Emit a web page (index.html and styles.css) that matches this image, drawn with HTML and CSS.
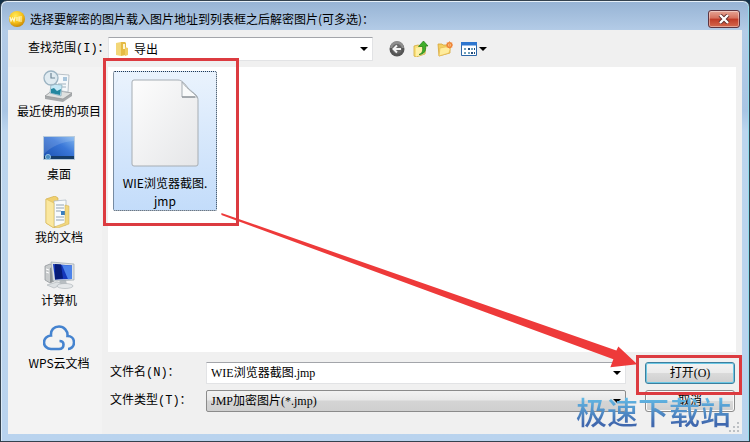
FILE: index.html
```
<!DOCTYPE html>
<html lang="zh-CN">
<head>
    <meta charset="UTF-8">
    <title>打开</title>
    <link rel="stylesheet" href="styles.css">
</head>
<body>
    <div class="window">
        <header class="titlebar">
            <svg class="app-icon" viewBox="0 0 16 16">
                <defs>
                    <radialGradient id="ball" cx="40%" cy="30%" r="70%">
                        <stop offset="0" stop-color="#ffe95a"/>
                        <stop offset="0.6" stop-color="#f7c21a"/>
                        <stop offset="1" stop-color="#c98a06"/>
                    </radialGradient>
                </defs>
                <circle cx="8" cy="8" r="8" fill="url(#ball)"/>
                <path d="M1 6l1 4 1.500-3 1.500 3 1-4M8 6v4M13 6h-3v4h3M10 8h3" fill="none" stroke="#fff8c8" stroke-width="1.200"/>
            </svg>
            <h1 class="title">选择要解密的图片载入图片地址到列表框之后解密图片(可多选)：</h1>
            <button class="close" type="button" aria-label="关闭">
                <svg viewBox="0 0 12 10">
                    <path d="M2 1l8 8M10 1l-8 8" stroke="#5c2a2a" stroke-width="4"/>
                    <path d="M2 1l8 8M10 1l-8 8" stroke="#fff" stroke-width="2.400"/>
                </svg>
            </button>
        </header>

        <form class="content">
            <div class="lookin">
                <label class="lookin-label" for="folder">查找范围(I)：</label>
                <div class="combo combo-folder">
                    <svg class="folder-icon" viewBox="0 0 14 16">
                        <path d="M1 2l5-1v14l-5-1z" fill="#f3d778"/>
                        <path d="M6 1h4l1 1v12l-5 1z" fill="#e5bb45"/>
                        <path d="M8 3h2v5H8z" fill="#fff6d0"/>
                        <path d="M10 6l3 1v7l-3 1z" fill="#f0cd62"/>
                    </svg>
                    <select id="folder"><option>导出</option></select>
                    <svg class="arrow" viewBox="0 0 8 4"><path d="M0 0h8L4 4z"/></svg>
                </div>
                <div class="tools">
                    <button type="button" aria-label="后退">
                        <svg class="tool-icon" viewBox="0 0 16 16">
                            <circle cx="8" cy="8" r="7.500" fill="#555"/>
                            <path d="M1 7a7 7 0 0 1 14 0z" fill="#8d8d8d"/>
                            <circle cx="8" cy="8" r="5" fill="#666"/>
                            <path d="M12 8H5M8 4.500L4.500 8 8 11.500" fill="none" stroke="#f2f2f2" stroke-width="2"/>
                        </svg>
                    </button>
                    <button type="button" aria-label="向上一级">
                        <svg class="tool-icon" viewBox="0 0 16 16">
                            <path d="M1 5l4-1 3 1 5-1-1 9-9 3-2-1z" fill="#f9e07a" stroke="#d3aa3c" stroke-width="0.800"/>
                            <path d="M3 7l10-2-2 8-8 2.500z" fill="#fff0a6"/>
                            <path d="M6 13.500c3.500-1 4-4 3.500-8H5.500L10.500 0l4.500 5h-2.500c.8 5-1.500 8.500-6.500 8.500z" fill="#3fae2a" stroke="#1f7a18" stroke-width="0.700"/>
                        </svg>
                    </button>
                    <button type="button" aria-label="新建文件夹">
                        <svg class="tool-icon" viewBox="0 0 16 16">
                            <path d="M1 3h4l1 1h7v8L2 15z" fill="#f3cf62" stroke="#d6a437" stroke-width="0.800"/>
                            <path d="M3 7l11-2-2 7-10 3z" fill="#ffec9c" stroke="#e2b64a" stroke-width="0.600"/>
                            <circle cx="12.500" cy="4" r="2.300" fill="#fff3c8" stroke="#ee8436" stroke-width="1.600"/>
                            <path d="M12.500 0v8M9 4h7M10 1.500l5 5M15 1.500l-5 5" stroke="#f08a3c" stroke-width="0.600"/>
                        </svg>
                    </button>
                    <button type="button" class="view-button" aria-label="查看">
                        <svg class="tool-icon" viewBox="0 0 16 16">
                            <path d="M0.500 1.500h15v13H.5z" fill="#fff" stroke="#2c67a8"/>
                            <path d="M0 1h16v3.500H0z" fill="#2d76cf"/>
                            <path d="M3 7h2v2H3zM10 7h2v2h-2zM7 11h2v2H7zM3 11h2v2H3z" fill="#6fa0ba"/>
                            <path d="M7 7h2v2H7zM10 11h2v2h-2zM13 7h1v2h-1zM13 11h1v2h-1z" fill="#244f7d"/>
                        </svg>
                        <svg class="arrow" viewBox="0 0 8 4"><path d="M0 0h8L4 4z"/></svg>
                    </button>
                </div>
            </div>

            <nav class="places">
                <button type="button" class="place">
                    <svg class="place-icon" viewBox="0 0 32 32">
                        <path d="M2 26l8-5 19 2v3l-9 6L2 29z" fill="#a6a9ab"/>
                        <path d="M2 26l8-6 19 3-9 6z" fill="#dfe1e0" stroke="#8e9193" stroke-width="0.700"/>
                        <path d="M13 4l13 1-1 17-12-2z" fill="#f5f8fa" stroke="#a9b4bb" stroke-width="0.800"/>
                        <path d="M20 7h4v4h-4z" fill="#a8c5dc"/>
                        <path d="M15 14h8M15 17h8" stroke="#9fb2bf"/>
                        <path d="M8 14l11 1-1 11-11-3z" fill="#c5e8f6" stroke="#86a9b8" stroke-width="0.700"/>
                        <path d="M8 19l3-1 3 3 4-2-1 6-9-2z" fill="#2387a0"/>
                        <circle cx="8" cy="8" r="7" fill="#dce9f0" fill-opacity="0.850" stroke="#9bb3c2" stroke-width="1.300"/>
                        <path d="M8 3v5h4" fill="none" stroke="#6f8797" stroke-width="1.200"/>
                    </svg>
                    <span>最近使用的项目</span>
                </button>
                <button type="button" class="place">
                    <svg class="place-icon" viewBox="0 0 32 32">
                        <defs>
                            <linearGradient id="sky" x1="0" y1="1" x2="1" y2="0">
                                <stop offset="0" stop-color="#1a4fae"/>
                                <stop offset="0.600" stop-color="#3a77d8"/>
                                <stop offset="1" stop-color="#7fb4ee"/>
                            </linearGradient>
                        </defs>
                        <path d="M0 3h32v24H0z" fill="#b8cbdc"/>
                        <path d="M1 4h30v22H1z" fill="url(#sky)"/>
                        <path d="M1 4h30v4C18 9 9 13 1 21z" fill="#fff" fill-opacity="0.140"/>
                        <path d="M1 23h30v3H1z" fill="#163c66"/>
                        <circle cx="5" cy="24" r="2.600" fill="#4a8ec4" stroke="#a8d3ea" stroke-width="0.800"/>
                    </svg>
                    <span>桌面</span>
                </button>
                <button type="button" class="place">
                    <svg class="place-icon" viewBox="0 0 32 32">
                        <path d="M3 3l9-3 3 2v27l-4 3-8-5z" fill="#f0d06f" stroke="#cfa941" stroke-width="0.600"/>
                        <path d="M11 5l12-1v25l-12 2z" fill="#f8fbfd" stroke="#a7b5c0" stroke-width="0.700"/>
                        <path d="M13 9h8M13 12h8M13 15h5M13 21h8M13 24h8" stroke="#93a5b4"/>
                        <path d="M18 15h4v4h-4z" fill="#3a7ec0"/>
                        <path d="M3 3l8 4v25l-8-5z" fill="#fae79f" stroke="#d9b856" stroke-width="0.600"/>
                        <path d="M22 9l4 1v18l-11 4-4-1 11-4z" fill="#f2d77f" stroke="#cfae52" stroke-width="0.500"/>
                    </svg>
                    <span>我的文档</span>
                </button>
                <button type="button" class="place">
                    <svg class="place-icon" viewBox="0 0 32 32">
                        <path d="M2 7l5-2 4 2v15l-4 2-5-3z" fill="#c8cbcc" stroke="#888e92" stroke-width="0.700"/>
                        <path d="M7 9l4-2v15l-4 2z" fill="#8f9497"/>
                        <path d="M3 10l3 1M3 13l3 1" stroke="#fff"/>
                        <path d="M17 21h6l1 5-8-1z" fill="#b8bec2"/>
                        <path d="M8 3l23 2v16L10 22z" fill="#dce0e3" stroke="#9ea7ad" stroke-width="0.700"/>
                        <path d="M10 5l19 1.500V20l-17 .5z" fill="#1537bb"/>
                        <path d="M12 5l6 .5 2 14-8 1z" fill="#071c78"/>
                        <path d="M19 6l10 .5V20l-4 .2z" fill="#4c82ea"/>
                        <path d="M4 26l10-3 6 2-9 4z" fill="#dde1e3" stroke="#a8afb3" stroke-width="0.600"/>
                        <ellipse cx="22" cy="27" rx="8" ry="2.500" fill="#e4e7e9" stroke="#a8afb3" stroke-width="0.600"/>
                    </svg>
                    <span>计算机</span>
                </button>
                <button type="button" class="place">
                    <svg class="place-icon" viewBox="0 0 32 32">
                        <path d="M25 27c3 0 6-2.500 6-6.500 0-4-3-6.500-6.500-6.500C25 9 21 4.500 16 4.500S7.500 8 8 13.500C4 13.500 1 17 1 20.500S4 27 8 27h8c3 0 4.500-2 4.500-4.500S18.500 19 16.500 19" fill="none" stroke="#4583cf" stroke-width="2.600"/>
                    </svg>
                    <span>WPS云文档</span>
                </button>
            </nav>

            <div class="files">
                <button type="button" class="file selected">
                    <svg class="file-icon" viewBox="0 0 68 88">
                        <defs>
                            <linearGradient id="paper" x1="0" y1="0" x2="1" y2="1">
                                <stop offset="0" stop-color="#fdfdfd"/>
                                <stop offset="1" stop-color="#e5e6e8"/>
                            </linearGradient>
                        </defs>
                        <path d="M3 1h44c4 0 7 4 10 8 3 3 6 5 8 7 2 2 2 4 2 6v63q0 2-2 2H3q-2 0-2-2V3q0-2 2-2z" fill="url(#paper)" stroke="#a6adb3"/>
                        <path d="M51 3v15h15C62 13 57 11 51 3z" fill="#f9fafa" stroke="#a6adb3"/>
                        <path d="M51 18h13" stroke="#7c8288"/>
                    </svg>
                    <span>WIE浏览器截图.<br>jmp</span>
                    <i class="mark mark-file"></i>
                </button>
            </div>

            <div class="fields">
                <label for="filename">文件名(N)：</label>
                <div class="combo">
                    <input id="filename" type="text" value="WIE浏览器截图.jmp">
                    <svg class="arrow" viewBox="0 0 8 4"><path d="M0 0h8L4 4z"/></svg>
                </div>
                <div class="action">
                    <button type="submit" class="push default">打开(O)</button>
                    <i class="mark mark-open"></i>
                </div>

                <label for="filetype">文件类型(T)：</label>
                <div class="combo combo-type">
                    <select id="filetype"><option>JMP加密图片(*.jmp)</option></select>
                    <svg class="arrow" viewBox="0 0 8 4"><path d="M0 0h8L4 4z"/></svg>
                </div>
                <div class="action">
                    <button type="button" class="push">取消</button>
                </div>
            </div>
        </form>

        <svg class="pointer" viewBox="0 0 750 442" preserveAspectRatio="none">
            <path d="M221 213L617 351 619 347 638 365 611 368 614 360 221 215z" fill="#ee3a3a"/>
        </svg>
        <div class="watermark">极速下载站</div>
        <svg class="grip" viewBox="0 0 10 10">
            <path d="M8 0h2v2H8zM4 4h2v2H4zM8 4h2v2H8zM0 8h2v2H0zM4 8h2v2H4zM8 8h2v2H8z" fill="#bcc0c4"/>
        </svg>
    </div>

    <script>
        document.querySelector('.content').addEventListener('submit', function(e) {
            e.preventDefault();
        });
    </script>
</body>
</html>
```

FILE: styles.css
```
* {
    box-sizing: border-box;
}

body {
    margin: 0;
    background: #123048;
    font-family: "Noto Sans CJK SC", sans-serif;
    font-size: 12px;
    line-height: 18px;
    color: #000;
}

button,
input,
select {
    margin: 0;
    padding: 0;
    border: none;
    background: none;
    font: inherit;
    color: inherit;
}

svg {
    display: block;
    flex: none;
}

.window {
    position: relative;
    display: flex;
    flex-direction: column;
    min-height: 100vh;
    padding: 0 7px 7px;
    border: 1px solid #34424f;
    border-radius: 7px 7px 0 0;
    background: linear-gradient(#96b3d4, #b4cce7 30px, #a9c5e4 110px, #bcd5ee 130px, #b9d3ee);
    box-shadow: inset 0 1px 0 #e6f0f8, inset 1px 0 0 #dcebf8, inset -1px 0 0 #8fdcec;
}

/* title bar */
.titlebar {
    display: flex;
    align-items: center;
    gap: 5px;
    height: 29px;
    padding: 6px 2px 0 1px;
}

.app-icon {
    width: 16px;
    height: 16px;
}

.title {
    flex: 1;
    margin: 0;
    font-size: 12px;
    font-weight: 400;
    white-space: nowrap;
}

.close {
    display: flex;
    align-items: center;
    justify-content: center;
    width: 32px;
    height: 18px;
    border: 1px solid #5d3440;
    border-radius: 3px;
    background: linear-gradient(#e5a595, #d5705c 45%, #bf3a26 50%, #d4694f);
    box-shadow: inset 0 0 0 1px rgba(255, 255, 255, 0.4);
}

.close svg {
    width: 12px;
    height: 10px;
}

/* dialog body */
.content {
    flex: 1;
    display: grid;
    grid-template-columns: 94px 1fr;
    grid-template-rows: 37px 1fr auto;
    column-gap: 6px;
    padding-right: 6px;
    background: #f0f0f0;
}

.lookin {
    grid-column: 1 / 3;
    display: flex;
    align-items: center;
    padding-left: 20px;
}

.lookin-label,
.fields label {
    font-family: "Liberation Mono", "Noto Sans CJK SC", monospace;
}

.fields {
    font-family: "Liberation Serif", "Noto Sans CJK SC", serif;
}

.lookin-label {
    width: 80px;
    white-space: nowrap;
}

.combo {
    display: flex;
    align-items: center;
    height: 22px;
    padding: 0 4px;
    border: 1px solid #e2e3e5;
    border-top-color: #a3a5aa;
    background: #fff;
}

.combo select,
.combo input {
    flex: 1;
    min-width: 0;
    height: 18px;
    appearance: none;
    outline: none;
}

.combo-folder {
    flex: 0 1 265px;
    height: 24px;
    padding-left: 6px;
    gap: 5px;
}

.folder-icon {
    width: 14px;
    height: 16px;
}

.arrow {
    width: 8px;
    height: 4px;
    pointer-events: none;
}

.tools {
    display: flex;
    gap: 8px;
    margin-left: 16px;
}

.tool-icon {
    width: 16px;
    height: 16px;
}

.view-button {
    display: flex;
    align-items: center;
    gap: 2px;
}

/* places bar */
.places {
    display: flex;
    flex-direction: column;
    gap: 13px;
    grid-row: 2 / 4;
    padding: 3px 0 0 8px;
    background: #f3f3f3;
}

.place {
    display: flex;
    flex-direction: column;
    align-items: center;
    white-space: nowrap;
}

.place-icon {
    width: 32px;
    height: 32px;
}

/* file list */
.files {
    padding: 4px 5px;
    background: #fff;
}

.file {
    position: relative;
    display: flex;
    flex-direction: column;
    align-items: center;
    gap: 7px;
    width: 104px;
    padding-top: 7px;
    border: 1px dotted transparent;
    border-radius: 2px;
}

.file.selected {
    border-color: #26384a;
    background: linear-gradient(#eaf3fd, #c3dcfa);
}

.file-icon {
    width: 68px;
    height: 88px;
}

/* bottom fields */
.fields {
    grid-column: 2;
    display: grid;
    grid-template-columns: 96px 1fr 90px;
    align-items: center;
    row-gap: 6px;
    padding: 10px 1px 22px 2px;
}

.fields .combo {
    margin-right: 19px;
}

.combo-type {
    border: 1px solid #8b8b8b;
    border-radius: 2px;
    background: linear-gradient(#f2f2f2, #e8e8e8 45%, #d4d4d4 50%, #cfcfcf);
}

.action {
    position: relative;
    display: flex;
}

.push {
    flex: 1;
    height: 22px;
    border: 1px solid #8b8b8b;
    border-radius: 3px;
    background: linear-gradient(#f2f2f2, #ebebeb 48%, #dadada 52%, #cfcfcf);
    box-shadow: inset 0 0 0 1px #fafafa;
}

.push.default {
    border-color: #3c7f9e;
    box-shadow: inset 0 0 0 1px #6cc7e4;
}

/* annotations */
.mark {
    position: absolute;
    z-index: 1;
    border: 3px solid #dc3b40;
    pointer-events: none;
}

.mark-file {
    inset: -14px -23px -16px -11px;
}

.mark-open {
    inset: -7px -7px -11px -9px;
}

.pointer {
    position: absolute;
    top: 0;
    left: 0;
    width: 100%;
    height: 100%;
    pointer-events: none;
}

.watermark {
    position: absolute;
    z-index: 2;
    right: 18px;
    bottom: 12px;
    font-size: 31px;
    font-weight: 500;
    line-height: 36px;
    background: linear-gradient(#62b8e4 15%, #4068ae 85%);
    background-clip: text;
    -webkit-background-clip: text;
    color: transparent;
    pointer-events: none;
}

.grip {
    position: absolute;
    right: 10px;
    bottom: 9px;
    width: 10px;
    height: 10px;
}
```
